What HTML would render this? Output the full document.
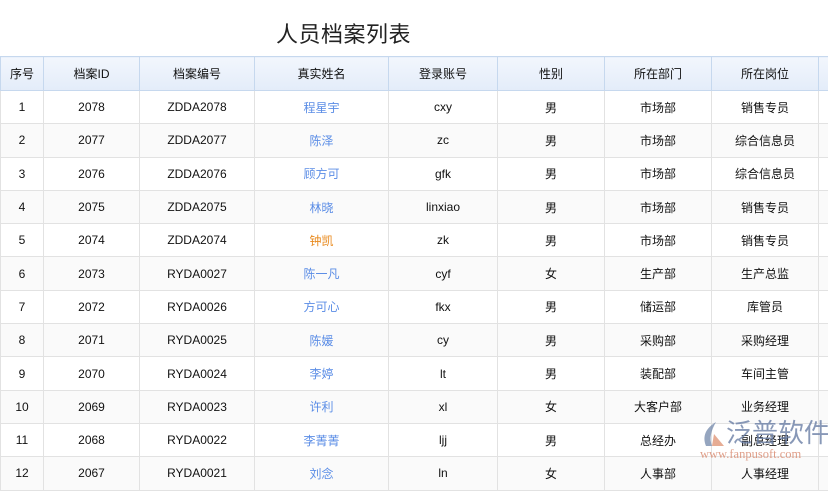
<!DOCTYPE html>
<html><head><meta charset="utf-8"><style>
body{margin:0;width:828px;height:468px;overflow:hidden;background:#fff;font-family:"Liberation Sans","Noto Sans CJK SC",sans-serif;position:relative}
.t{position:absolute;left:276px;top:17px;font-size:22px;color:#222;letter-spacing:0.5px}
table{position:absolute;left:0;top:56px;border-collapse:collapse;table-layout:fixed;width:829px}
td,th{border:1px solid #e2e2e2;text-align:center;font-size:12px;color:#111;font-weight:normal;height:32.3px;padding:0}
th{background:linear-gradient(#f2f6fd,#e3ecf9);border-color:#c6d8ee;height:33px}
tr:nth-child(odd) td{background:#fafafa}
.n{color:#5b8de6}.o{color:#e8891c}
.wm{position:absolute;left:700px;top:418px;opacity:.8}
</style></head><body>
<div class="t">人员档案列表</div>
<table>
<colgroup><col style="width:43px"><col style="width:96px"><col style="width:115px"><col style="width:134px"><col style="width:109px"><col style="width:107px"><col style="width:107px"><col style="width:107px"><col style="width:11px"></colgroup>
<tr><th>序号</th><th>档案ID</th><th>档案编号</th><th>真实姓名</th><th>登录账号</th><th>性别</th><th>所在部门</th><th>所在岗位</th><th></th></tr>
<tr><td>1</td><td>2078</td><td>ZDDA2078</td><td class="n">程星宇</td><td>cxy</td><td>男</td><td>市场部</td><td>销售专员</td><td></td></tr>
<tr><td>2</td><td>2077</td><td>ZDDA2077</td><td class="n">陈泽</td><td>zc</td><td>男</td><td>市场部</td><td>综合信息员</td><td></td></tr>
<tr><td>3</td><td>2076</td><td>ZDDA2076</td><td class="n">顾方可</td><td>gfk</td><td>男</td><td>市场部</td><td>综合信息员</td><td></td></tr>
<tr><td>4</td><td>2075</td><td>ZDDA2075</td><td class="n">林晓</td><td>linxiao</td><td>男</td><td>市场部</td><td>销售专员</td><td></td></tr>
<tr><td>5</td><td>2074</td><td>ZDDA2074</td><td class="o">钟凯</td><td>zk</td><td>男</td><td>市场部</td><td>销售专员</td><td></td></tr>
<tr><td>6</td><td>2073</td><td>RYDA0027</td><td class="n">陈一凡</td><td>cyf</td><td>女</td><td>生产部</td><td>生产总监</td><td></td></tr>
<tr><td>7</td><td>2072</td><td>RYDA0026</td><td class="n">方可心</td><td>fkx</td><td>男</td><td>储运部</td><td>库管员</td><td></td></tr>
<tr><td>8</td><td>2071</td><td>RYDA0025</td><td class="n">陈媛</td><td>cy</td><td>男</td><td>采购部</td><td>采购经理</td><td></td></tr>
<tr><td>9</td><td>2070</td><td>RYDA0024</td><td class="n">李婷</td><td>lt</td><td>男</td><td>装配部</td><td>车间主管</td><td></td></tr>
<tr><td>10</td><td>2069</td><td>RYDA0023</td><td class="n">许利</td><td>xl</td><td>女</td><td>大客户部</td><td>业务经理</td><td></td></tr>
<tr><td>11</td><td>2068</td><td>RYDA0022</td><td class="n">李菁菁</td><td>ljj</td><td>男</td><td>总经办</td><td>副总经理</td><td></td></tr>
<tr><td>12</td><td>2067</td><td>RYDA0021</td><td class="n">刘念</td><td>ln</td><td>女</td><td>人事部</td><td>人事经理</td><td></td></tr>
</table>
<div class="wm">
<svg width="26" height="28" style="position:absolute;left:0;top:2px"><path d="M16 2 C6 8 2 16 6 26 L12 26 C9 18 11 11 16 2 Z" fill="#7b8fb0"/><path d="M14 14 L24 26 L12 26 Z" fill="#e0987a"/></svg>
<div style="position:absolute;left:26px;top:0;font-size:26px;color:#6b7fa6;white-space:nowrap;line-height:30px">泛普软件</div>
<div style="position:absolute;left:0;top:29px;font-size:12.5px;color:#d8876c;font-family:'Liberation Serif',serif;white-space:nowrap">www.fanpusoft.com</div>
</div>
</body></html>
